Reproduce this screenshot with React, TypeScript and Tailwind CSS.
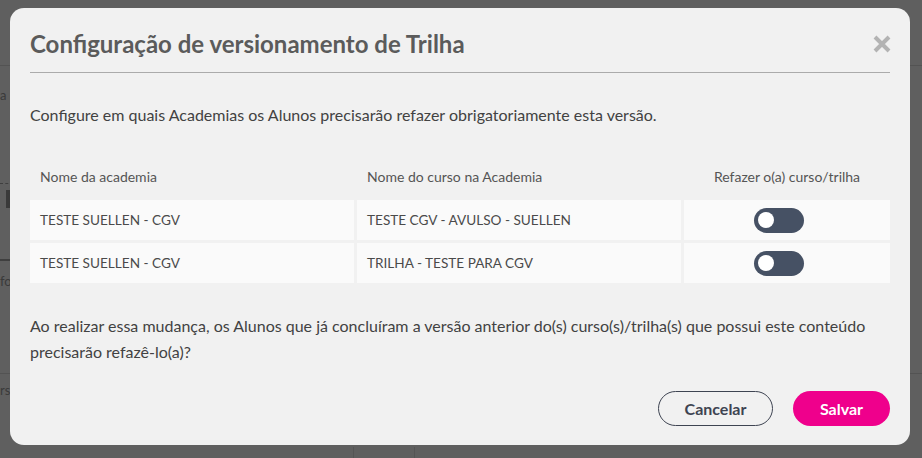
const ROWS = [
  { academia: "TESTE SUELLEN - CGV", curso: "TESTE CGV - AVULSO - SUELLEN" },
  { academia: "TESTE SUELLEN - CGV", curso: "TRILHA - TESTE PARA CGV" },
];

function Toggle() {
  return (
    <button className="flex h-[25px] w-[50px] items-center rounded-full bg-[#465164] px-[4px]">
      <span className="h-[16px] w-[16px] rounded-full bg-white" />
    </button>
  );
}

function Backdrop() {
  return (
    <div className="flex h-[458px] w-full flex-col bg-[#5f5f5f] text-[13px] text-[#3a3a3a]">
      <div className="h-[66px] border-b border-[#535353]" />
      <div className="h-[21px]" />
      <div className="leading-[16px]">a r</div>
      <div className="h-[80px]" />
      <div className="w-[40px] border-t border-dashed border-[#3f3f3f]" />
      <div className="mt-[6px] h-[18px] w-[20px] bg-[#3a3a3a] ml-[6px]" />
      <div className="h-[51px]" />
      <div className="h-[2px] w-[18px] bg-[#3f3f3f]" />
      <div className="mt-[12px] leading-[16px]">fo</div>
      <div className="h-[84px]" />
      <div className="border-t border-[#535353]" />
      <div className="mt-[8px] leading-[16px]">rs</div>
      <div className="flex-1" />
      <div className="ml-[353px] h-[11px] w-[62px] border-x border-[#555]" />
    </div>
  );
}

export default function App() {
  return (
    <div className="relative h-[458px] w-[922px] overflow-hidden" style={{ fontFamily: "Lato, 'Open Sans', sans-serif" }}>
      <Backdrop />
      <div className="absolute left-[10px] top-[8px] flex h-[437px] w-[900px] flex-col rounded-[14px] bg-[#f1f1f1] px-[20px] pt-[21px]">
        <div className="flex items-center justify-between">
          <h2 className="text-[24px] font-bold leading-[30px] text-[#5b5b5b]">Configuração de versionamento de Trilha</h2>
          <svg width="18" height="18" viewBox="0 0 18 18" className="mr-[-1px]">
            <path d="M2 2 L16 16 M16 2 L2 16" stroke="#b3b3b3" strokeWidth="4" />
          </svg>
        </div>
        <div className="mt-[13px] border-t border-[#ababab]" />
        <p className="mt-[31px] text-[16px] leading-[22px] text-[#424242]">
          Configure em quais Academias os Alunos precisarão refazer obrigatoriamente esta versão.
        </p>
        <div className="mt-[30px] grid grid-cols-[324px_324px_1fr] gap-x-[3px] gap-y-[3px] text-[13.6px]">
          <div className="flex h-[41px] items-center px-[10px] text-[14px] text-[#555]">Nome da academia</div>
          <div className="flex h-[41px] items-center px-[10px] text-[14px] text-[#555]">Nome do curso na Academia</div>
          <div className="flex h-[41px] items-center justify-center text-[14px] text-[#555]">Refazer o(a) curso/trilha</div>
          {ROWS.map((r, i) => (
            <div key={i} className="contents">
              <div className="flex h-[40px] items-center bg-[#fafafa] px-[10px] text-[#4a4a4a]">{r.academia}</div>
              <div className="flex h-[40px] items-center bg-[#fafafa] px-[10px] text-[#4a4a4a]">{r.curso}</div>
              <div className="flex h-[40px] items-center justify-center bg-[#fafafa] pr-[17px]">
                <Toggle />
              </div>
            </div>
          ))}
        </div>
        <p className="mt-[30px] text-[16px] leading-[26px] text-[#424242]">
          Ao realizar essa mudança, os Alunos que já concluíram a versão anterior do(s) curso(s)/trilha(s) que possui este conteúdo precisarão refazê-lo(a)?
        </p>
        <div className="mt-[26px] flex justify-end gap-[20px]">
          <button className="h-[35px] w-[115px] rounded-full border border-[#3e4452] text-[16px] font-bold text-[#3e4452]">
            Cancelar
          </button>
          <button className="h-[35px] w-[97px] rounded-full bg-[#ef008c] text-[16px] font-bold text-white">
            Salvar
          </button>
        </div>
      </div>
    </div>
  );
}
